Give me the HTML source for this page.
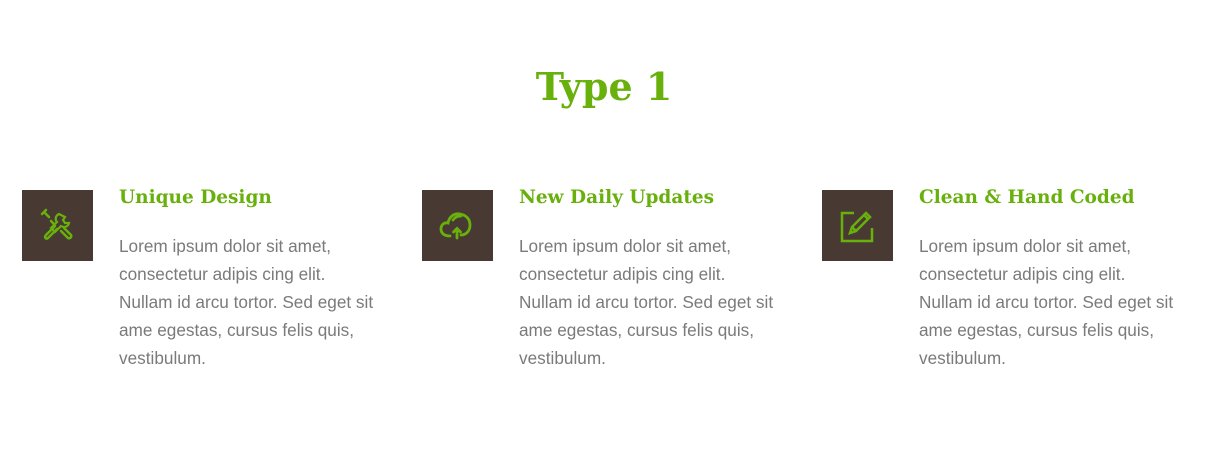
<!DOCTYPE html>
<html><head><style>
body{margin:0;background:#fff;width:1232px;height:449px;overflow:hidden;font-family:"Liberation Sans",sans-serif}
h1{position:absolute;left:0;width:1208px;top:64px;margin:0;text-align:center;font:bold 38px "DejaVu Serif",serif;color:#68b00c}
.col{position:absolute;top:190px;width:380px}
.box{position:absolute;left:0;top:0;width:71px;height:71px;background:#483a32}
.box svg{position:absolute;left:17px;top:17px}
h3{position:absolute;left:97px;top:-3px;margin:0;font:bold 18.5px "DejaVu Serif",serif;color:#68b00c;white-space:nowrap}
p{position:absolute;left:97px;top:42px;margin:0;font-size:17.2px;line-height:28px;color:#7a7a7a;white-space:nowrap}
</style></head><body>
<h1>Type 1</h1>
<div class="col" style="left:22px"><div class="box"><svg width="37" height="37" viewBox="0 0 37 37" fill="none" stroke="#68b00c" stroke-width="2.5" stroke-linecap="round"><path d="M5 5l5 5M3 7l4-4M12 14l3 3"/><path d="M16 19l-9 9c-2 2 0 5 2 3l9-9"/><path d="M20 7c-4 2-4 6-2 8l-6 6 4 4 6-6c3 2 7 1 8-3l-4 0-2-3 2-3z" stroke-width="2.2"/><path d="M22 24l7 7c2 1 4-1 3-3l-7-7M25 27l3 3"/></svg></div><h3>Unique Design</h3><p>Lorem ipsum dolor sit amet,<br>consectetur adipis cing elit.<br>Nullam id arcu tortor. Sed eget sit<br>ame egestas, cursus felis quis,<br>vestibulum.</p></div>
<div class="col" style="left:422px"><div class="box"><svg width="37" height="37" viewBox="0 0 37 37" fill="none" stroke="#68b00c" stroke-width="2.8" stroke-linecap="round"><path d="M11 29c-6 0-9-3-9-7s3-7 7-6c1-6 6-10 12-9 6 1 10 5 10 11s-4 10-9 10"/><path d="M14 13c2-3 5-4 8-4"/><path d="M18 31v-9M14.5 25l3.5-3.5 3.5 3.5"/></svg></div><h3>New Daily Updates</h3><p>Lorem ipsum dolor sit amet,<br>consectetur adipis cing elit.<br>Nullam id arcu tortor. Sed eget sit<br>ame egestas, cursus felis quis,<br>vestibulum.</p></div>
<div class="col" style="left:822px"><div class="box"><svg width="37" height="37" viewBox="0 0 37 37" fill="none" stroke="#68b00c" stroke-width="2.5"><path d="M15 6H3v28h30V21"/><path d="M11 26l2-6 14-14 4 4-14 14z"/><path d="M25 8l4 4M13 20l4 4"/></svg></div><h3>Clean &amp; Hand Coded</h3><p>Lorem ipsum dolor sit amet,<br>consectetur adipis cing elit.<br>Nullam id arcu tortor. Sed eget sit<br>ame egestas, cursus felis quis,<br>vestibulum.</p></div>
</body></html>
